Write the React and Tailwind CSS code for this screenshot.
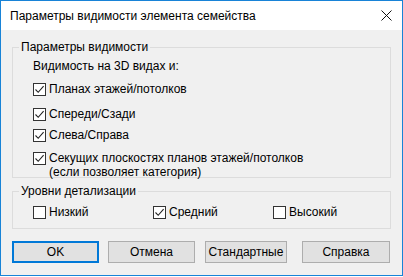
function Check({ checked }) {
    return (
        <span className="w-[13px] h-[13px] border border-[#333333] bg-white flex items-center justify-center shrink-0">
            {checked && (
                <svg width="11" height="11" viewBox="0 0 11 11">
                    <path d="M1.5 5.5 L4.2 8.3 L9.6 2.2" fill="none" stroke="#222" strokeWidth="1.1" />
                </svg>
            )}
        </span>
    );
}

function Option({ checked, children, className = "" }) {
    return (
        <div className={`flex items-start gap-[3px] ${className}`}>
            <Check checked={checked} />
            <span className="leading-[14px] -mt-[1px]">{children}</span>
        </div>
    );
}

export default function App() {
    const font = { fontFamily: '"Liberation Sans", Arial, sans-serif' };
    return (
        <div className="w-[403px] h-[277px] bg-white" style={font}>
            <div className="w-[403px] h-[276px] border border-[#1883d7] flex flex-col text-[12px] text-black">
                <div className="h-[29px] bg-white flex items-center justify-between pl-[9px] pr-[10px]">
                    <span className="text-[12px] mt-[1px]">Параметры видимости элемента семейства</span>
                    <svg width="11" height="11" viewBox="0 0 11 11">
                        <path d="M0.5 0.5 L10.5 10.5 M10.5 0.5 L0.5 10.5" stroke="#111" strokeWidth="1" />
                    </svg>
                </div>
                <div className="flex-1 bg-[#f0f0f0] px-[11px] pt-[9px]">
                    <fieldset className="border border-[#dcdcdc] h-[139px]">
                        <legend className="ml-[6px] px-[2px] leading-[16px]">Параметры видимости</legend>
                        <div className="pl-[20px]">
                            <div className="leading-[14px] mt-[4px]">Видимость на 3D видах и:</div>
                            <Option checked className="mt-[10px]">Планах этажей/потолков</Option>
                            <Option checked className="mt-[12px]">Спереди/Сзади</Option>
                            <Option checked className="mt-[8px]">Слева/Справа</Option>
                            <Option checked className="mt-[10px]">
                                Секущих плоскостях планов этажей/потолков
                                <br />
                                (если позволяет категория)
                            </Option>
                        </div>
                    </fieldset>
                    <fieldset className="border border-[#dcdcdc] h-[46px] mt-[5px]">
                        <legend className="ml-[6px] px-[2px] leading-[16px]">Уровни детализации</legend>
                        <div className="flex mt-[7px] pl-[20px]">
                            <Option className="w-[120px]">Низкий</Option>
                            <Option checked className="w-[120px]">Средний</Option>
                            <Option>Высокий</Option>
                        </div>
                    </fieldset>
                    <div className="flex mt-[12px] h-[22px]">
                        <button className="w-[87px] border-2 border-[#0078d7] bg-[#e1e1e1] flex items-center justify-center">OK</button>
                        <button className="w-[87px] ml-[9px] border border-[#adadad] bg-[#e1e1e1] flex items-center justify-center">Отмена</button>
                        <button className="w-[82px] ml-[10px] border border-[#adadad] bg-[#e1e1e1] flex items-center justify-center">Стандартные</button>
                        <button className="w-[88px] ml-[15px] border border-[#adadad] bg-[#e1e1e1] flex items-center justify-center">Справка</button>
                    </div>
                </div>
            </div>
        </div>
    );
}
